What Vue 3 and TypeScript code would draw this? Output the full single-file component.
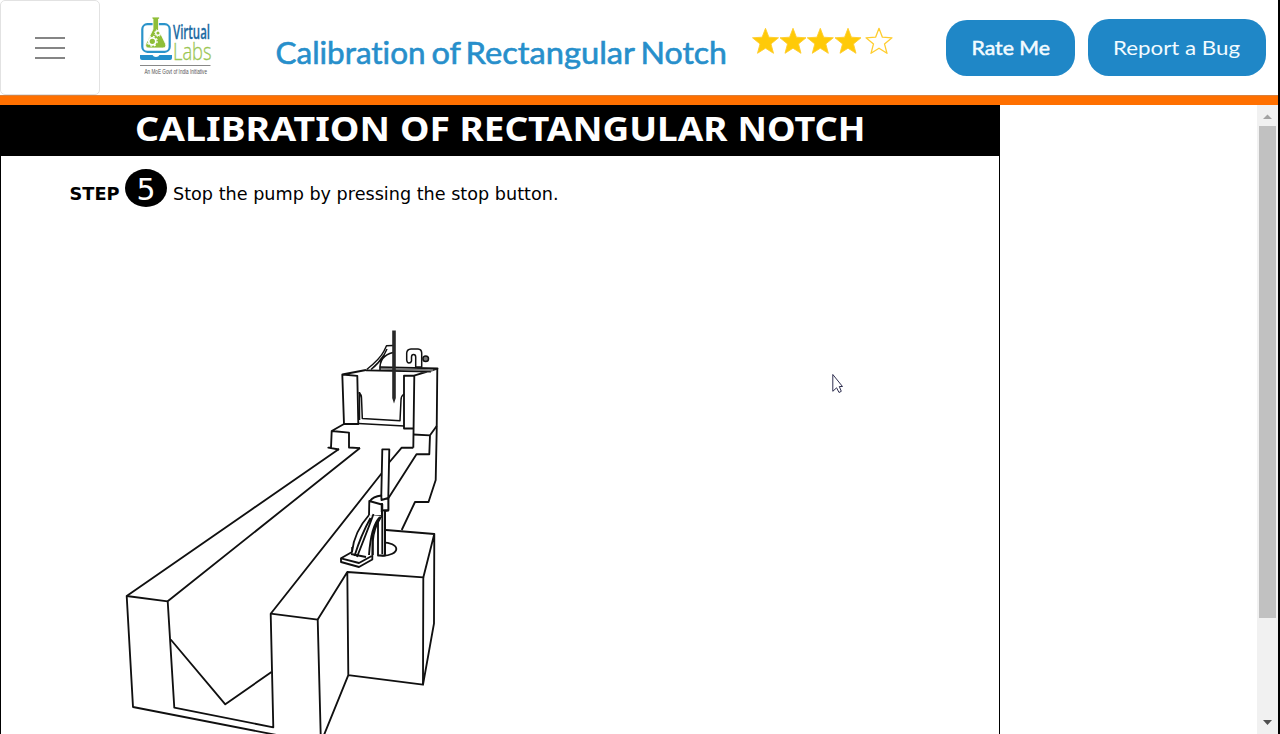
<script setup lang="ts">
const titleWords = [
  { text: 'Calibration', x: 3.5, width: 150 },
  { text: 'of', x: 159.5, width: 29.5 },
  { text: 'Rectangular', x: 193.5, width: 169.5 },
  { text: 'Notch', x: 368.5, width: 86.5 },
]
const headingWords = [
  { text: 'CALIBRATION', x: 135, width: 255 },
  { text: 'OF', x: 400, width: 50 },
  { text: 'RECTANGULAR', x: 459.5, width: 268 },
  { text: 'NOTCH', x: 737.5, width: 128 },
]
const stepNumber = 5
const instruction = 'Stop the pump by pressing the stop button.'
const starPoints = '13,0 16.4,8.9 26,9.5 18.5,15.6 21,25 13,19.9 5,25 7.5,15.6 0,9.5 9.6,8.9'
const stars = [
  { x: 0.5, filled: true },
  { x: 28, filled: true },
  { x: 55.3, filled: true },
  { x: 83, filled: true },
  { x: 114, filled: false },
]
</script>

<template>
  <div class="page">
    <header class="navbar">
      <button class="toggler" aria-label="Menu"><i /><i /><i /></button>
      <svg class="logo" width="80" height="66" viewBox="136 14 80 66">
        <rect x="142.300" y="24.200" width="27.400" height="27.600" rx="5" fill="none" stroke="#2a93ca" stroke-width="2.200" />
        <path d="M140 55h12.500q1 2 3.500 2t3.500-2H172v3q0 2-2 2h-28q-2 0-2-2z" fill="#238fcb" />
        <path d="M152 17h7.500v2h-1v10.200l7 14.600q1.300 4.200-3 4.200h-13.500q-4.300 0-3-4.200l7-14.600V19h-1z" fill="#8fbe38" stroke="#fff" stroke-width=".8" />
        <circle cx="152.300" cy="41.300" r="3.500" fill="none" stroke="#fff" stroke-width="1.700" />
        <circle cx="152.300" cy="41.300" r="4.900" fill="none" stroke="#fff" stroke-width="1.300" stroke-dasharray="1.900 1.950" />
        <circle cx="158" cy="33" r="2.300" fill="none" stroke="#fff" stroke-width="1.400" />
        <circle cx="158" cy="33" r="3.400" fill="none" stroke="#fff" stroke-width="1" stroke-dasharray="1.300 1.370" />
        <text x="173" y="38.700" class="virtual" textLength="37" lengthAdjust="spacingAndGlyphs">Virtual</text>
        <text x="173" y="60" class="labs" textLength="38.500" lengthAdjust="spacingAndGlyphs">Labs</text>
        <path d="M140 65.500h70.500" stroke="#888" stroke-width="1" />
        <text x="144.500" y="73.700" class="tag" textLength="62.500" lengthAdjust="spacingAndGlyphs">An MoE Govt of India Initiative</text>
      </svg>
      <svg class="title" width="460" height="60" viewBox="0 0 460 60">
        <text
          v-for="word in titleWords"
          :key="word.text"
          :x="word.x"
          y="43.500"
          :textLength="word.width"
          lengthAdjust="spacingAndGlyphs"
        >{{ word.text }}</text>
      </svg>
      <svg class="stars" width="142" height="28" viewBox="0 0 142 28">
        <polygon
          v-for="star in stars"
          :key="star.x"
          :points="starPoints"
          :transform="`translate(${star.x} 1.3)`"
          :fill="star.filled ? '#ffca08' : '#fff'"
          stroke="#ffcd2e"
          :stroke-width="star.filled ? 0.9 : 1.3"
          stroke-linejoin="round"
        />
      </svg>
      <button class="pill rate">
        <svg width="84" height="30" viewBox="0 0 84 30"><text x="2.500" y="21.500" textLength="78.500" lengthAdjust="spacingAndGlyphs">Rate Me</text></svg>
      </button>
      <button class="pill report">
        <svg width="134" height="30" viewBox="0 0 134 30"><text x="3" y="22" textLength="127" lengthAdjust="spacingAndGlyphs">Report a Bug</text></svg>
      </button>
    </header>

    <div class="stripe" />

    <div class="body">
      <main class="sheet">
        <h1>
          <svg width="1000" height="51" viewBox="0 0 1000 51">
            <text
              v-for="word in headingWords"
              :key="word.text"
              :x="word.x"
              y="36"
              :textLength="word.width"
              lengthAdjust="spacingAndGlyphs"
            >{{ word.text }}</text>
          </svg>
        </h1>
        <svg class="scene" width="998" height="578" viewBox="1 156 998 578">
          <text x="69.500" y="200" class="step" textLength="50" lengthAdjust="spacingAndGlyphs">STEP</text>
          <ellipse cx="146" cy="188" rx="21" ry="19" />
          <text x="146" y="199.500" class="number" text-anchor="middle">{{ stepNumber }}</text>
          <text x="173" y="200" class="instruction" textLength="385.500" lengthAdjust="spacingAndGlyphs">{{ instruction }}</text>

          <g class="ink">
            <!-- open channel -->
            <path d="M339 449L126.700 596L133 707L276.700 735" />
            <path d="M360 448L167.700 601.300L174.300 707.700L273.300 727.300L270.700 613.700L381.700 473.300" />
            <path d="M126.700 596L167.700 601.300M270.700 613.700L317.700 619.600L320.700 735" />
            <path d="M170.700 639.500L225.300 704.300L271.500 672" />
            <!-- side chamber -->
            <path d="M317.700 619.600L347.300 572L348.300 675.200L324 735M347.300 572L423.300 577.400L423 684.700L348.300 675.200" />
            <path d="M386 530L434.300 534L423.300 577.400M434.300 534L434 623.300L423 684.700" />
            <!-- rear tank -->
            <path d="M342.300 374.500L357.300 375.800L358.300 424L344 424zM342.300 374.500L366 370" />
            <path d="M366 370.300L431 371.500M380 367.200L437.500 368.500L414 375.700H404V428.500H413.500M414.300 375.700L413.300 447.700" />
            <path d="M437.300 368.500L436.700 430L435.700 480L428.500 502H415L401.700 530" />
            <path d="M344 424L331.700 431L331 447.700H328.300L339 449.500M331.700 431L349 432.700V447.500L360 448.200" />
            <path d="M413.300 447.700H401.700L388.300 463.500M413.300 434.500L430 435.300L436.700 426M430 435.300L429.300 454.200H416.500L388.500 498" />
            <path class="band" d="M380 368.800L433 370.200" />
            <path class="fine" d="M358.500 392.500Q361.500 394 361.500 398L362.300 418.500L400 420.700L401 400Q401 396 404 394M359.500 392V420M358.300 423.500L404 426" />
            <path class="fine" d="M366.700 369.500Q380 359 384 351L386.500 345.800L393 345.500M371 369.500Q379 363 384 355L387 349M380 370Q379 356 393 352.500" />
            <path class="fill fine" d="M406.700 360V353Q407 349.300 411 349H418Q421.600 349.300 421.700 353V367H415.700V357Q415.700 354.500 413.500 354.500Q411.600 354.500 411.500 357V361Q411 363 409 363Q407 363 406.700 360z" />
            <circle class="knob" cx="425.700" cy="358.800" r="2.800" />
            <path class="rod" d="M394 330.500V398" />
            <path class="tip" d="M392.200 398H395.800L394 403.500z" />
            <!-- point gauge -->
            <ellipse cx="382.500" cy="549" rx="13.800" ry="6.700" />
            <path class="blank" d="M352 551L369 514L383 515V556L366 560z" />
            <path class="fill" d="M382.300 449.300H389.300L388.300 496.500V510.500L385 511V555.500H378V512L381.300 495z" />
            <path class="fill" d="M370 501Q373 496.500 381.300 495.500L381.500 500L388.300 498V510L382 510.500V516H369L369.300 501L381.700 504.500V512" />
            <path d="M382 503V514M382.300 504V554M385 511V554" />
            <path class="fill" d="M369 515Q354 532 352 552L341 558.300V562L359 567L372.300 559.500L372.500 535Q376 520 382.300 516" />
            <path d="M341 558.300L359 563L371.700 556M351 554L366 557" />
            <path d="M373.500 514Q370 524 357 557M370.500 518Q361 535 354.500 556M380 517Q371 526 369 555" />
            <path class="fine" d="M380.500 518Q374 528 373 541V555M352 547V552" />
          </g>

          <path class="cursor" d="M832.800 374.500V391.300L836.600 387.800L839 392.500L841.300 391.300L839.300 386.500H842.500z" />
        </svg>
      </main>
      <aside class="scrollbar">
        <svg width="21" height="629" viewBox="0 0 21 629">
          <path d="M6 14L10.500 9.500L15 14z" fill="#a3a3a3" />
          <rect x="2" y="21" width="17" height="492" fill="#c1c1c1" />
          <path d="M6 615H15L10.500 620z" fill="#505050" />
        </svg>
      </aside>
    </div>
  </div>
</template>

<style>
html, body { overflow: hidden; }
</style>

<style scoped>
.page {
  box-sizing: border-box;
  width: 1280px;
  height: 734px;
  overflow: hidden;
  border-right: 2px solid #000;
  background: #fff;
  font-family: Lato, "Noto Sans", sans-serif;
}
svg { display: block; flex: none; }
button { font: inherit; }
.navbar { display: flex; align-items: flex-start; height: 95px; }
.toggler {
  box-sizing: border-box;
  width: 100px;
  height: 95px;
  flex: none;
  padding: 0;
  border: 1px solid #e2e2e2;
  border-radius: 5px;
  background: #fff;
  display: flex;
  flex-direction: column;
  align-items: center;
  justify-content: center;
  gap: 8px;
}
.toggler i { width: 30px; height: 2px; background: #858585; }
.logo { margin: 14px 0 0 36px; overflow: visible; }
.virtual { font: 600 19.500px "Open Sans", sans-serif; fill: #1c6ba3; stroke: #1c6ba3; stroke-width: .3px; }
.labs { font: 300 24px "Open Sans", sans-serif; fill: #9bc653; stroke: #9bc653; stroke-width: .3px; }
.tag { font: 6.600px "Liberation Sans", sans-serif; fill: #555; }
.title { margin: 20px 0 0 56px; }
.title text {
  font-size: 30.500px;
  font-variant-ligatures: none;
  fill: #278fcb;
  stroke: #278fcb;
  stroke-width: .6px;
}
.stars { margin: 27px 0 0 20px; }
.pill {
  box-sizing: border-box;
  flex: none;
  display: flex;
  align-items: center;
  justify-content: center;
  padding: 0;
  border: 0;
  border-radius: 21px;
  background: #1f87c7;
}
.pill text { font-size: 20px; fill: #f2fbff; }
.rate { width: 129px; height: 56px; margin: 20px 0 0 52px; }
.rate text { stroke: #f2fbff; stroke-width: .5px; }
.report { width: 178px; height: 57px; margin: 19px 0 0 13px; }
.stripe { height: 10px; background: #ff7000; box-sizing: border-box; border-top: 1px solid #d9803c; }
.body { display: flex; justify-content: space-between; height: 629px; }
.sheet { width: 1000px; height: 629px; }
h1 { margin: 0; height: 51px; background: #000; }
h1 text { font: 700 33.500px "Noto Sans", sans-serif; fill: #fff; }
.scene { border: solid #000; border-width: 0 1px; }
.step { font: 700 17.500px "DejaVu Sans", sans-serif; }
.number { font: 30px "DejaVu Sans", sans-serif; fill: #fff; }
.instruction { font: 17.800px "DejaVu Sans", sans-serif; }
.ink { fill: none; stroke: #101010; stroke-width: 1.850px; stroke-linejoin: round; }
.ink .fine { stroke-width: 1.500px; }
.ink .fill { fill: #fff; }
.ink .blank { fill: #fff; stroke: none; }
.ink .band { stroke: #777; stroke-width: 2px; }
.ink .rod { stroke: #282828; stroke-width: 3.600px; }
.ink .tip { fill: #282828; stroke: none; }
.ink .knob { fill: #777; stroke-width: 1.500px; }
.cursor { fill: #fff; stroke: #303050; stroke-width: 1px; }
.scrollbar { width: 21px; background: #f1f1f1; }
</style>
